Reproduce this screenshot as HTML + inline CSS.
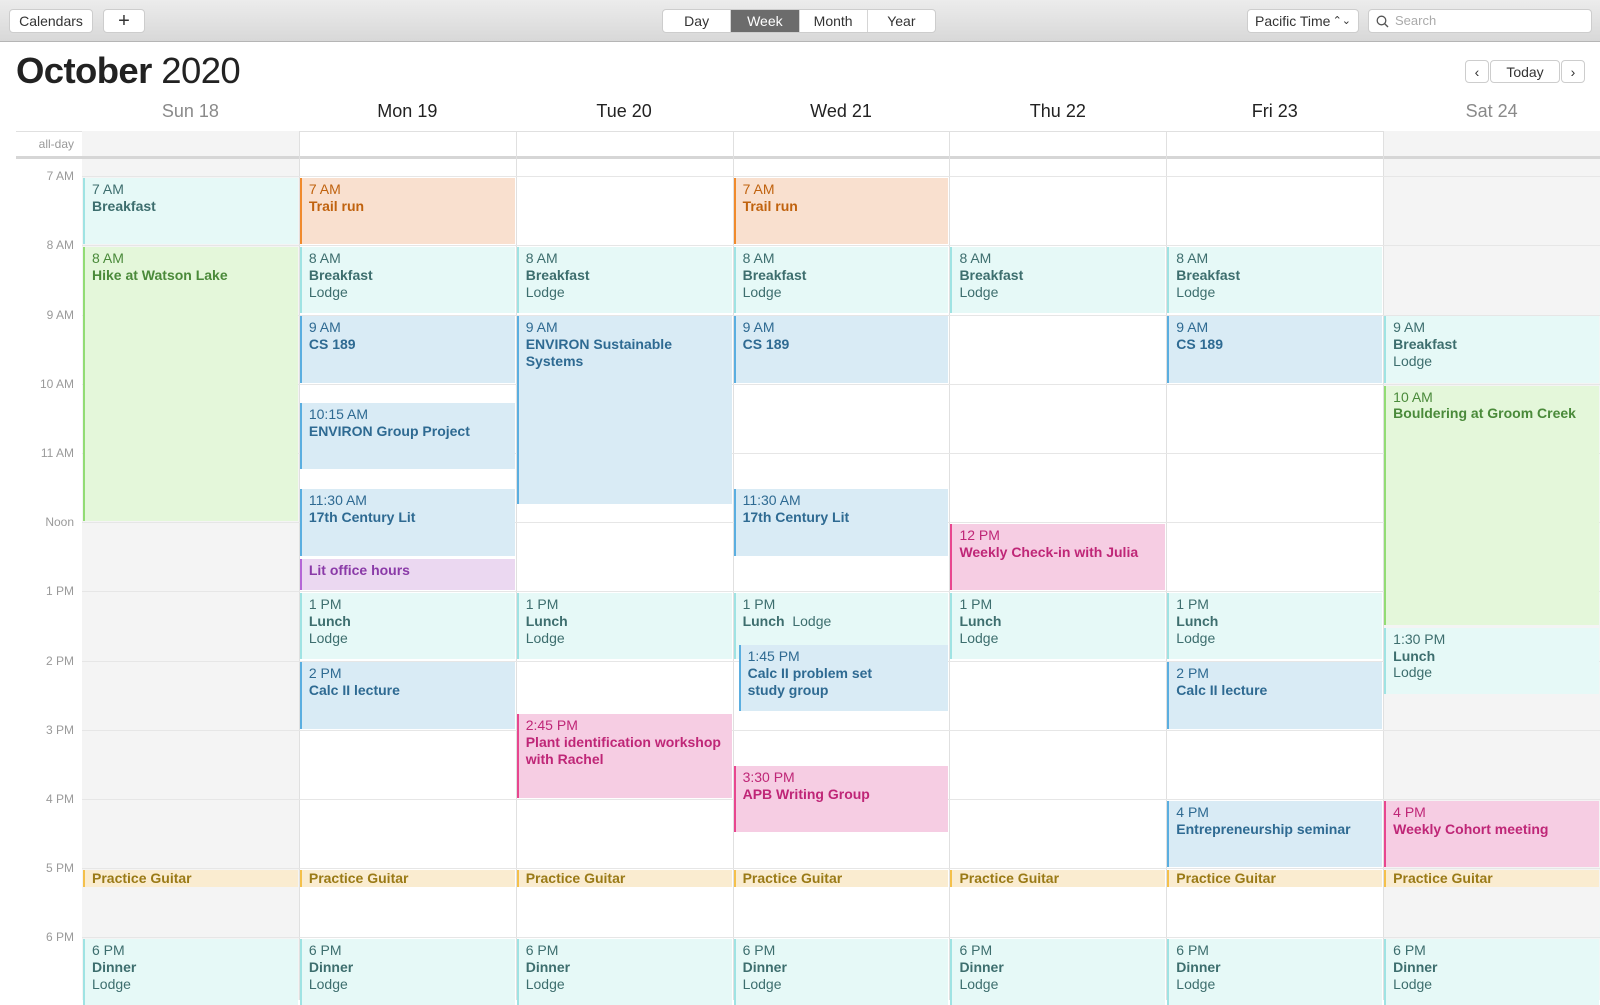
<!DOCTYPE html>
<html><head><meta charset="utf-8"><style>
*{box-sizing:border-box;margin:0;padding:0}
body{width:1600px;height:1000px;overflow:hidden;background:#fff;font-family:"Liberation Sans",sans-serif;position:relative;--y0:176.5px;--hh:69.2px;--cw:216.86px}
.tb{position:absolute;left:0;top:0;width:1600px;height:42px;background:linear-gradient(#ececec,#d8d8d8);border-bottom:1px solid #b5b5b5}
.btn{position:absolute;top:9px;height:24px;background:#fff;border:1px solid #cdcdcd;border-radius:4px;font-size:14px;color:#333;line-height:22px;text-align:center}
.seg{position:absolute;top:9px;left:662px;width:274px;height:24px;display:flex;border:1px solid #cdcdcd;border-radius:4px;background:#fff;overflow:hidden}
.seg div{flex:1;text-align:center;font-size:14px;line-height:22px;color:#333;border-left:1px solid #d5d5d5}
.seg div:first-child{border-left:none}
.seg .on{background:#6c6c6c;color:#fff}
h1{position:absolute;left:16px;top:50px;font-size:36.5px;font-weight:bold;color:#222;letter-spacing:-0.6px}
h1 span{font-weight:normal}
.dh{position:absolute;top:101px;width:216.86px;text-align:center;font-size:18px;color:#222}
.gray{color:#8a8a8a}
.lbl{position:absolute;left:16px;width:58px;text-align:right;font-size:12px;color:#9a9a9a}
.hl{position:absolute;left:82px;width:1518px;height:1px;background:#e6e6e6}
.vl{position:absolute;top:131px;width:1px;height:869px;background:#e0e0e0}
.ev{position:absolute;left:calc(82px + var(--c)*var(--cw) + 1px);width:calc(var(--cw) - 2px);top:calc(var(--y0) + (var(--s) - 7)*var(--hh) + 1.5px);height:calc((var(--e) - var(--s))*var(--hh) - 3px);border-left:2px solid;padding:3px 4px 0 7px;font-size:14px;line-height:16.8px;overflow:hidden}
.ev b{display:block;font-weight:bold}
.t{background:#e6f9f7;color:#3d6e6e;border-color:#9fe3e3}
.o{background:#f9e0cf;color:#c0620e;border-color:#f08a2c}
.g{background:#e4f7da;color:#4a8a3a;border-color:#92dc74}
.b{background:#d9ebf5;color:#2e6a92;border-color:#5aaee0}
.p{background:#ebd8f1;color:#8a3aa8;border-color:#b466d6}
.k{background:#f6cde3;color:#bf2677;border-color:#e8468f}
.y{background:#faecd0;color:#9a7a16;border-color:#f4c04a;height:17px!important;padding-top:0;line-height:16px}
</style></head><body>
<div class="tb">
<div class="btn" style="left:9px;width:84px">Calendars</div>
<div class="btn" style="left:103px;width:42px;font-size:20px">+</div>
<div class="seg"><div>Day</div><div class="on">Week</div><div>Month</div><div>Year</div></div>
<div class="btn" style="left:1247px;width:112px;text-align:left;padding-left:7px">Pacific Time <span style="font-size:11px;position:absolute;right:7px">⌃⌄</span></div>
<div class="btn" style="left:1368px;width:224px;text-align:left;padding-left:26px;color:#aaa;font-size:13px"><svg style="position:absolute;left:7px;top:5px" width="13" height="13" viewBox="0 0 13 13"><circle cx="5.5" cy="5.5" r="4.3" fill="none" stroke="#555" stroke-width="1.3"/><path d="M8.6 8.6L12 12" stroke="#555" stroke-width="1.4"/></svg>Search</div>
</div>
<h1>October <span>2020</span></h1>
<div class="btn" style="left:1465px;top:60px;width:24px;height:23px">&#8249;</div>
<div class="btn" style="left:1490px;top:60px;width:70px;height:23px">Today</div>
<div class="btn" style="left:1561px;top:60px;width:24px;height:23px">&#8250;</div>
<div class="dh gray" style="left:82px">Sun 18</div>
<div class="dh" style="left:298.9px">Mon 19</div>
<div class="dh" style="left:515.7px">Tue 20</div>
<div class="dh" style="left:732.6px">Wed 21</div>
<div class="dh" style="left:949.4px">Thu 22</div>
<div class="dh" style="left:1166.3px">Fri 23</div>
<div class="dh gray" style="left:1383.2px">Sat 24</div>
<div style="position:absolute;left:16px;top:131px;width:1584px;height:1px;background:#e0e0e0"></div>
<div style="position:absolute;left:82px;top:131px;width:217px;height:869px;background:#f4f4f4"></div>
<div style="position:absolute;left:1383px;top:131px;width:217px;height:869px;background:#f4f4f4"></div>
<div class="lbl" style="top:137px">all-day</div>
<div style="position:absolute;left:16px;top:156px;width:1584px;height:3px;background:#d6d6d6"></div>
<div class="vl" style="left:298.9px"></div><div class="vl" style="left:515.7px"></div><div class="vl" style="left:732.6px"></div><div class="vl" style="left:949.4px"></div><div class="vl" style="left:1166.3px"></div><div class="vl" style="left:1383.2px"></div>
<div class="hl" style="top:176px"></div><div class="hl" style="top:245px"></div><div class="hl" style="top:315px"></div><div class="hl" style="top:384px"></div><div class="hl" style="top:453px"></div><div class="hl" style="top:522px"></div><div class="hl" style="top:591px"></div><div class="hl" style="top:661px"></div><div class="hl" style="top:730px"></div><div class="hl" style="top:799px"></div><div class="hl" style="top:868px"></div><div class="hl" style="top:937px"></div>
<div class="lbl" style="top:169px">7 AM</div><div class="lbl" style="top:238px">8 AM</div><div class="lbl" style="top:308px">9 AM</div><div class="lbl" style="top:377px">10 AM</div><div class="lbl" style="top:446px">11 AM</div><div class="lbl" style="top:515px">Noon</div><div class="lbl" style="top:584px">1 PM</div><div class="lbl" style="top:654px">2 PM</div><div class="lbl" style="top:723px">3 PM</div><div class="lbl" style="top:792px">4 PM</div><div class="lbl" style="top:861px">5 PM</div><div class="lbl" style="top:930px">6 PM</div>

<div class="ev t" style="--c:0;--s:7;--e:8">7 AM<b>Breakfast</b></div>
<div class="ev g" style="--c:0;--s:8;--e:12">8 AM<b>Hike at Watson Lake</b></div>

<div class="ev o" style="--c:1;--s:7;--e:8">7 AM<b>Trail run</b></div>
<div class="ev t" style="--c:1;--s:8;--e:9">8 AM<b>Breakfast</b>Lodge</div>
<div class="ev b" style="--c:1;--s:9;--e:10">9 AM<b>CS 189</b></div>
<div class="ev b" style="--c:1;--s:10.25;--e:11.25">10:15 AM<b>ENVIRON Group Project</b></div>
<div class="ev b" style="--c:1;--s:11.5;--e:12.5">11:30 AM<b>17th Century Lit</b></div>
<div class="ev p" style="--c:1;--s:12.5;--e:13"><b>Lit office hours</b></div>
<div class="ev t" style="--c:1;--s:13;--e:14">1 PM<b>Lunch</b>Lodge</div>
<div class="ev b" style="--c:1;--s:14;--e:15">2 PM<b>Calc II lecture</b></div>

<div class="ev t" style="--c:2;--s:8;--e:9">8 AM<b>Breakfast</b>Lodge</div>
<div class="ev b" style="--c:2;--s:9;--e:11.75">9 AM<b>ENVIRON Sustainable<br>Systems</b></div>
<div class="ev t" style="--c:2;--s:13;--e:14">1 PM<b>Lunch</b>Lodge</div>
<div class="ev k" style="--c:2;--s:14.75;--e:16">2:45 PM<b>Plant identification workshop with Rachel</b></div>

<div class="ev o" style="--c:3;--s:7;--e:8">7 AM<b>Trail run</b></div>
<div class="ev t" style="--c:3;--s:8;--e:9">8 AM<b>Breakfast</b>Lodge</div>
<div class="ev b" style="--c:3;--s:9;--e:10">9 AM<b>CS 189</b></div>
<div class="ev b" style="--c:3;--s:11.5;--e:12.5">11:30 AM<b>17th Century Lit</b></div>
<div class="ev t" style="--c:3;--s:13;--e:14">1 PM<br><b style="display:inline">Lunch</b>&nbsp; Lodge</div>
<div class="ev b" style="--c:3;--s:13.75;--e:14.75;left:calc(82px + 3*var(--cw) + 6px);width:calc(var(--cw) - 7px)">1:45 PM<b>Calc II problem set<br>study group</b></div>
<div class="ev k" style="--c:3;--s:15.5;--e:16.5">3:30 PM<b>APB Writing Group</b></div>

<div class="ev t" style="--c:4;--s:8;--e:9">8 AM<b>Breakfast</b>Lodge</div>
<div class="ev k" style="--c:4;--s:12;--e:13">12 PM<b>Weekly Check-in with Julia</b></div>
<div class="ev t" style="--c:4;--s:13;--e:14">1 PM<b>Lunch</b>Lodge</div>

<div class="ev t" style="--c:5;--s:8;--e:9">8 AM<b>Breakfast</b>Lodge</div>
<div class="ev b" style="--c:5;--s:9;--e:10">9 AM<b>CS 189</b></div>
<div class="ev t" style="--c:5;--s:13;--e:14">1 PM<b>Lunch</b>Lodge</div>
<div class="ev b" style="--c:5;--s:14;--e:15">2 PM<b>Calc II lecture</b></div>
<div class="ev b" style="--c:5;--s:16;--e:17">4 PM<b>Entrepreneurship seminar</b></div>

<div class="ev t" style="--c:6;--s:9;--e:10">9 AM<b>Breakfast</b>Lodge</div>
<div class="ev g" style="--c:6;--s:10;--e:13.5">10 AM<b>Bouldering at Groom Creek</b></div>
<div class="ev t" style="--c:6;--s:13.5;--e:14.5">1:30 PM<b>Lunch</b>Lodge</div>
<div class="ev k" style="--c:6;--s:16;--e:17">4 PM<b>Weekly Cohort meeting</b></div>

<div class="ev y" style="--c:0;--s:17;--e:17.25"><b>Practice Guitar</b></div>
<div class="ev y" style="--c:1;--s:17;--e:17.25"><b>Practice Guitar</b></div>
<div class="ev y" style="--c:2;--s:17;--e:17.25"><b>Practice Guitar</b></div>
<div class="ev y" style="--c:3;--s:17;--e:17.25"><b>Practice Guitar</b></div>
<div class="ev y" style="--c:4;--s:17;--e:17.25"><b>Practice Guitar</b></div>
<div class="ev y" style="--c:5;--s:17;--e:17.25"><b>Practice Guitar</b></div>
<div class="ev y" style="--c:6;--s:17;--e:17.25"><b>Practice Guitar</b></div>

<div class="ev t" style="--c:0;--s:18;--e:19">6 PM<b>Dinner</b>Lodge</div>
<div class="ev t" style="--c:1;--s:18;--e:19">6 PM<b>Dinner</b>Lodge</div>
<div class="ev t" style="--c:2;--s:18;--e:19">6 PM<b>Dinner</b>Lodge</div>
<div class="ev t" style="--c:3;--s:18;--e:19">6 PM<b>Dinner</b>Lodge</div>
<div class="ev t" style="--c:4;--s:18;--e:19">6 PM<b>Dinner</b>Lodge</div>
<div class="ev t" style="--c:5;--s:18;--e:19">6 PM<b>Dinner</b>Lodge</div>
<div class="ev t" style="--c:6;--s:18;--e:19">6 PM<b>Dinner</b>Lodge</div>
</body></html>
